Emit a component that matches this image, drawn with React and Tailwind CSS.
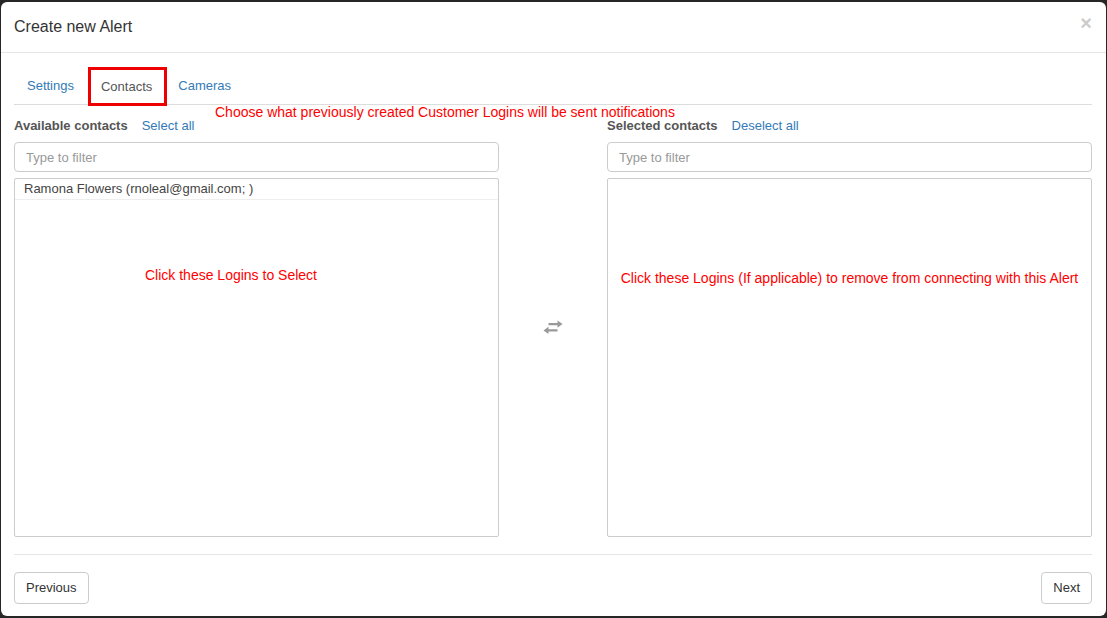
import { useState } from 'react'

function SwapIcon() {
  return (
    <svg width="20" height="15" viewBox="0 0 20 15" className="text-[#999]">
      <path d="M5.5 3h9V0.5l5 3.6-5 3.6V5.3h-9z" fill="currentColor" />
      <path d="M14.5 9.3h-9V6.8l-5 3.6 5 3.6v-2.4h9z" fill="currentColor" />
    </svg>
  )
}

function ContactColumn({ label, action, items, hint, hintClass }) {
  return (
    <div className="flex w-[485px] flex-col">
      <div className="flex h-[20px] items-center gap-[14px] text-[13px]">
        <span className="font-bold text-[#555]">{label}</span>
        <a className="text-[#337ab7]">{action}</a>
      </div>
      <input
        type="text"
        placeholder="Type to filter"
        className="mt-[6px] h-[30px] w-full rounded-[4px] border border-[#ccc] px-[11px] text-[13px] text-[#555] placeholder:text-[#999] outline-none"
      />
      <div className="mt-[6px] h-[359px] rounded-[2px] border border-[#ccc]">
        {items.map((item) => (
          <div key={item} className="h-[21px] border-b border-[#eee] px-[9px] text-[13px] leading-[19px] text-[#444]">
            {item}
          </div>
        ))}
        <div className={hintClass}>{hint}</div>
      </div>
    </div>
  )
}

export default function App() {
  const [tab] = useState('Contacts')
  const tabs = [
    { name: 'Settings', pad: 'px-[13px]' },
    { name: 'Contacts', pad: '' },
    { name: 'Cameras', pad: 'px-[11px]' },
  ]

  return (
    <div className="h-[618px] bg-[#262626] px-[1px] pt-[2px] pb-[2px] font-['Liberation_Sans',Arial,sans-serif] text-[13px] text-[#333]">
      <div className="flex h-full flex-col rounded-[6px] bg-white">
        <div className="flex h-[51px] items-center justify-between border-b border-[#e5e5e5] pl-[13px] pr-[14px]">
          <h4 className="text-[16px] text-[#333]">Create new Alert</h4>
          <span className="mb-[8px] text-[20px] font-bold leading-none text-[#ccc]">×</span>
        </div>

        <div className="relative flex flex-1 flex-col pl-[13px] pr-[14px] pt-[14px]">
          <div className="flex h-[38px] items-start border-b border-[#ddd]">
            {tabs.map((t) => (
              <div
                key={t.name}
                className={
                  t.name === tab
                    ? 'ml-[1px] flex h-[39px] items-center border-[3px] border-[#ee0000] pl-[10px] pr-[12px] text-[#555]'
                    : `flex h-[37px] items-center ${t.pad} text-[#337ab7]`
                }
              >
                {t.name}
              </div>
            ))}
          </div>
          <div className="absolute left-[214px] top-[49px] text-[14px] text-[#f00]">
            Choose what previously created Customer Logins will be sent notifications
          </div>

          <div className="mt-[11px] flex items-start justify-between">
            <ContactColumn
              label="Available contacts"
              action="Select all"
              items={['Ramona Flowers (rnoleal@gmail.com; )']}
              hint="Click these Logins to Select"
              hintClass="pl-[130px] pt-[65px] text-[14px] text-[#f00]"
            />
            <div className="flex h-[421px] w-[108px] items-start justify-center pt-[204px]">
              <SwapIcon />
            </div>
            <ContactColumn
              label="Selected contacts"
              action="Deselect all"
              items={[]}
              hint="Click these Logins (If applicable) to remove from connecting with this Alert"
              hintClass="pt-[89px] text-center text-[14px] text-[#f00]"
            />
          </div>

          <div className="mt-[17px] border-t border-[#e5e5e5]" />
          <div className="flex justify-between pt-[17px]">
            <button className="h-[32px] rounded-[4px] border border-[#ccc] px-[11px] text-[#333]">Previous</button>
            <button className="h-[32px] rounded-[4px] border border-[#ccc] px-[11px] text-[#333]">Next</button>
          </div>
        </div>
      </div>
    </div>
  )
}
